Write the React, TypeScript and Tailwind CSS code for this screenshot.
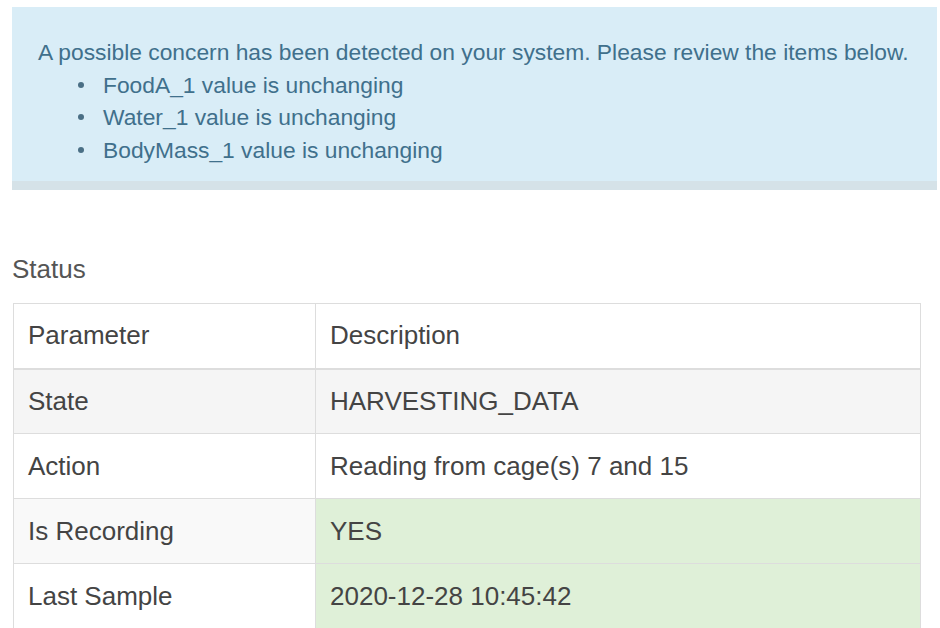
export default function App() {
  const rows = [
    { param: 'State', desc: 'HARVESTING_DATA', rowBg: 'bg-[#f5f5f5]', descBg: '' },
    { param: 'Action', desc: 'Reading from cage(s) 7 and 15', rowBg: 'bg-white', descBg: '' },
    { param: 'Is Recording', desc: 'YES', rowBg: 'bg-[#f9f9f9]', descBg: 'bg-[#dff0d8]' },
    { param: 'Last Sample', desc: '2020-12-28 10:45:42', rowBg: 'bg-white', descBg: 'bg-[#dff0d8]' },
  ];
  const concerns = ['FoodA_1 value is unchanging', 'Water_1 value is unchanging', 'BodyMass_1 value is unchanging'];

  return (
    <div className="min-h-screen bg-white pt-[7px] font-['Liberation_Sans',Arial,sans-serif]">
      {/* Alert */}
      <div className="ml-[12px] mr-[3px] h-[183px] bg-[#d9edf7] border-b-[9px] border-[#d5e2e8] pl-[26px] pt-[29px] text-[22.8px] leading-[32.5px] text-[#40708c]">
        <div>A possible concern has been detected on your system. Please review the items below.</div>
        <ul className="pl-[40px]">
          {concerns.map((c) => (
            <li key={c} className="flex items-center">
              <span className="mr-[19px] h-[6px] w-[6px] rounded-full bg-[#4a6f85]" />
              {c}
            </li>
          ))}
        </ul>
      </div>

      {/* Status */}
      <div className="mt-[64px] ml-[12px] text-[26px] leading-[30px] text-[#555]">Status</div>

      <table className="mt-[19px] ml-[13px] w-[908px] border-collapse text-[26px] text-[#444]">
        <thead>
          <tr className="h-[65px] bg-white">
            <th className="w-[302px] border border-b-2 border-[#ddd] pl-[14px] text-left font-normal">Parameter</th>
            <th className="border border-b-2 border-[#ddd] pl-[14px] text-left font-normal">Description</th>
          </tr>
        </thead>
        <tbody>
          {rows.map((r) => (
            <tr key={r.param} className={`h-[65px] ${r.rowBg}`}>
              <td className="border border-[#ddd] pl-[14px]">{r.param}</td>
              <td className={`border border-[#ddd] pl-[14px] ${r.descBg}`}>{r.desc}</td>
            </tr>
          ))}
        </tbody>
      </table>
    </div>
  );
}
